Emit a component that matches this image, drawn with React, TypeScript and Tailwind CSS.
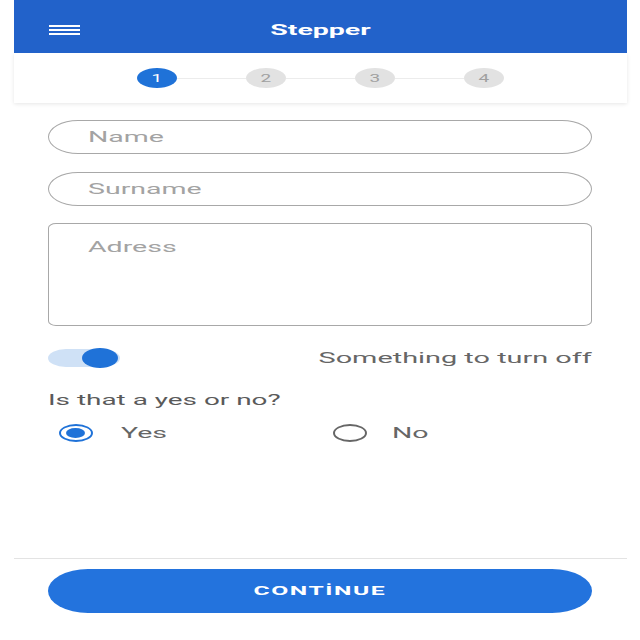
import React from "react";

const font = { fontFamily: "Roboto, 'Liberation Sans', sans-serif" };

function Step({ n, active }: { n: number; active?: boolean }) {
  return (
    <div
      className={
        "w-[40px] h-[20px] rounded-[50%] flex items-center justify-center text-[10px] " +
        (active ? "bg-[#1f72d8] text-white" : "bg-[#e2e2e2] text-[#a0a0a0]")
      }
    >
      <span className="inline-block scale-x-[1.9] origin-center">{n}</span>
    </div>
  );
}

function Line() {
  return <div className="w-[69px] h-px bg-[#ececec]" />;
}

export default function App() {
  return (
    <div className="w-full h-[640px] bg-white" style={font}>
      <div className="w-[613px] h-full mx-auto flex flex-col">
        <div className="h-[53px] shrink-0 bg-[#2262ca] flex items-center relative pt-[7px]">
          <div className="ml-[35px] w-[31px] flex flex-col gap-[2px]">
            <div className="h-[2px] bg-white" />
            <div className="h-[2px] bg-white" />
            <div className="h-[2px] bg-white" />
          </div>
          <div className="absolute inset-0 pt-[7px] flex items-center justify-center">
            <span className="inline-block scale-x-[1.9] origin-center text-white font-bold text-[15px]">
              Stepper
            </span>
          </div>
        </div>
        <div className="h-[50px] shrink-0 bg-white shadow-[0_1px_4px_rgba(0,0,0,0.1)] flex items-center justify-center">
          <Step n={1} active />
          <Line />
          <Step n={2} />
          <Line />
          <Step n={3} />
          <Line />
          <Step n={4} />
        </div>
        <div className="pl-[34px] pr-[35px] pt-[17px] flex flex-col flex-1">
          <div className="h-[34px] rounded-[30px/17px] border border-[#a8a8a8] flex items-center pl-[39px] text-[15px] text-[#a3a3a3]">
            <span className="inline-block scale-x-[1.9] origin-left">Name</span>
          </div>
          <div className="mt-[18px] h-[34px] rounded-[30px/17px] border border-[#a8a8a8] flex items-center pl-[39px] text-[15px] text-[#a3a3a3]">
            <span className="inline-block scale-x-[1.9] origin-left">Surname</span>
          </div>
          <div className="mt-[17px] h-[103px] rounded-[8px/5px] border border-[#a8a8a8] pl-[39px] pt-[12px] text-[15px] text-[#a3a3a3]">
            <span className="inline-block scale-x-[1.9] origin-left">Adress</span>
          </div>
          <div className="mt-[21px] h-[22px] flex items-center justify-between">
            <div className="w-[72px] h-[18px] rounded-[18px/9px] bg-[#cfe1f6] flex items-center justify-end pr-[2px]">
              <div className="w-[36px] h-[20px] rounded-[50%] bg-[#1f72d8]" />
            </div>
            <span className="inline-block scale-x-[1.9] origin-right text-[15.2px] text-[#666]">
              Something to turn off
            </span>
          </div>
          <div className="mt-[20px] text-[14.7px] text-[#5a5a5a]">
            <span className="inline-block scale-x-[1.9] origin-left">Is that a yes or no?</span>
          </div>
          <div className="mt-[12px] flex items-center h-[20px]">
            <div className="ml-[11px] w-[274px] flex items-center">
              <div className="w-[34px] h-[18px] rounded-[50%] border-[2.5px] border-[#1f72d8] flex items-center justify-center">
                <div className="w-[19px] h-[10px] rounded-[50%] bg-[#1f72d8]" />
              </div>
              <span className="ml-[28px] inline-block scale-x-[1.9] origin-left text-[15px] text-[#666]">Yes</span>
            </div>
            <div className="flex items-center">
              <div className="w-[34px] h-[18px] rounded-[50%] border-[2px] border-[#666]" />
              <span className="ml-[25px] inline-block scale-x-[1.9] origin-left text-[15px] text-[#666]">No</span>
            </div>
          </div>
          <div className="flex-1" />
        </div>
        <div className="h-px bg-[#e3e3e3] shrink-0" />
        <div className="h-[81px] shrink-0 pl-[34px] pr-[35px] pt-[10px]">
          <div className="h-[44px] rounded-[40px/22px] bg-[#2373dd] flex items-center justify-center">
            <span className="inline-block scale-x-[1.9] origin-center text-white font-bold text-[13px] tracking-[0.8px]">
              CONTİNUE
            </span>
          </div>
        </div>
      </div>
    </div>
  );
}
